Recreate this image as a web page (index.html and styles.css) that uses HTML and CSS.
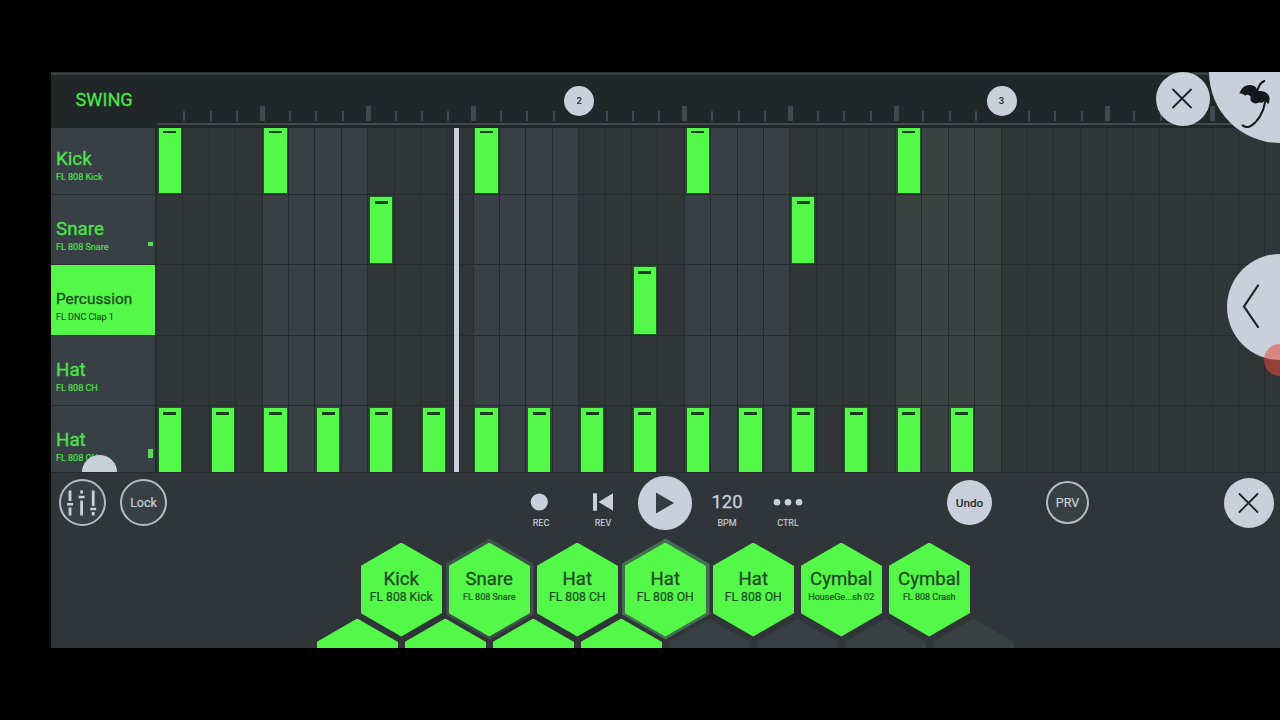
FILE: index.html
```html
<!DOCTYPE html>
<html lang="en">
<head>
    <meta charset="UTF-8">
    <meta name="viewport" content="width=device-width, initial-scale=1.0">
    <title>Step Sequencer</title>
    <link rel="stylesheet" href="styles.css">
</head>
<body>

<div class="app">
    <!-- Ruler -->
    <div class="header">
        <div class="swing">SWING</div>
        <div class="ruler" id="ruler"></div>
    </div>

    <!-- Channels and steps -->
    <div class="sequencer">
        <div class="channels">
            <div class="channel">
                <div class="channel-name">Kick</div>
                <div class="channel-sample">FL 808 Kick</div>
            </div>
            <div class="channel">
                <div class="channel-name">Snare</div>
                <div class="channel-sample">FL 808 Snare</div>
                <span class="level low"></span>
            </div>
            <div class="channel selected">
                <div class="channel-name long">Percussion</div>
                <div class="channel-sample">FL DNC Clap 1</div>
            </div>
            <div class="channel">
                <div class="channel-name">Hat</div>
                <div class="channel-sample">FL 808 CH</div>
            </div>
            <div class="channel">
                <div class="channel-name">Hat</div>
                <div class="channel-sample">FL 808 OH</div>
                <span class="level"></span>
            </div>
        </div>
        <div class="steps" id="steps"></div>
        <div class="playhead"></div>
        <div class="knob"></div>
    </div>

    <!-- Transport -->
    <div class="toolbar">
        <button class="ring mixer">
            <svg width="30" height="28" viewBox="0 0 30 28">
                <path d="M3 1.500v10.500M3 18.500v8M14.600 1.500v3M14.600 11.500v15M26.200 1.500v15.500M26.200 23v3.500" stroke-width="2.800"/>
                <path d="M0 15.300h6M11.600 8h6M23.200 20h6" stroke-width="2.600"/>
            </svg>
        </button>
        <button class="ring lock">Lock</button>
        <div class="control rec">
            <svg width="20" height="20" viewBox="0 0 20 20"><circle cx="8.300" cy="10" r="8.600"/></svg>
            <span>REC</span>
        </div>
        <div class="control rev">
            <svg width="20" height="20" viewBox="0 0 20 20"><path d="M0 1.300h4v17.400h-4zM20 1.300v17.400L5.500 10z"/></svg>
            <span>REV</span>
        </div>
        <button class="round play">
            <svg width="18" height="22" viewBox="0 0 18 22"><path d="M0 .5v21L18 11z"/></svg>
        </button>
        <div class="control bpm">
            <strong>120</strong>
            <span>BPM</span>
        </div>
        <div class="control ctrl">
            <svg width="30" height="20" viewBox="0 0 30 20"><circle cx="4" cy="10.300" r="3.300"/><circle cx="15" cy="10.300" r="3.300"/><circle cx="26" cy="10.300" r="3.300"/></svg>
            <span>CTRL</span>
        </div>
        <button class="round undo">Undo</button>
        <button class="ring prv">PRV</button>
        <button class="round close">
            <svg width="20" height="20" viewBox="0 0 20 20"><path d="M.5 1l18 18M18.500 1L.5 19"/></svg>
        </button>
    </div>

    <!-- Drum pads -->
    <div class="pads">
        <div class="pad-row" id="padRow"></div>
        <div class="pad-row offset" id="padRowBelow"></div>
    </div>

    <button class="round close close-top">
        <svg width="20" height="20" viewBox="0 0 20 20"><path d="M0 .5l18 18M18 .5L0 18.500"/></svg>
    </button>
    <div class="corner">
        <svg width="55" height="70" viewBox="0 0 165 210">
            <path class="leaf" d="M43 70C50 52 62 44 76 45C90 46 97 54 97 64C106 62 122 63 130 74C136 84 134 96 129 103C126 97 121 94 116 95C112 99 107 100 103 96C98 101 90 101 86 99C77 96 74 88 77 79C70 73 64 73 61 77C56 73 50 71 43 70z"/>
            <path class="stem" d="M118 33C107 37 101 48 97 62M120 97C116 128 96 156 80 166C68 174 62 172 53 166"/>
        </svg>
    </div>
    <button class="drawer">
        <svg width="16" height="44" viewBox="0 0 16 44"><path d="M15 1.500L1 22.500l14 20.500"/></svg>
    </button>
    <div class="touch"></div>
</div>

<script>
    var STEP_COUNT = 43;
    var patterns = [
        [0, 4, 12, 20, 28],
        [8, 24],
        [18],
        [],
        [0, 2, 4, 6, 8, 10, 12, 14, 16, 18, 20, 22, 24, 26, 28, 30]
    ];
    var pads = [
        ["Kick", "FL 808 Kick", ""],
        ["Snare", "FL 808 Snare", "small fading"],
        ["Hat", "FL 808 CH", ""],
        ["Hat", "FL 808 OH", "hit"],
        ["Hat", "FL 808 OH", ""],
        ["Cymbal", "HouseGe...sh 02", "small"],
        ["Cymbal", "FL 808 Crash", "small"]
    ];

    drawRuler();
    drawSteps();
    drawPads();

    function drawRuler() {
        var html = "";
        for (var i = 0; i < STEP_COUNT; i++) {
            if (i > 0 && i % 16 === 0) {
                html += "<div class='tick'><span class='bar-number'>" + (i / 16 + 1) + "</span></div>";
            } else if (i === 0) {
                html += "<div class='tick'></div>";
            } else {
                html += "<div class='tick " + (i % 4 === 0 ? "major" : "minor") + "'></div>";
            }
        }
        document.getElementById("ruler").innerHTML = html;
    }

    function drawSteps() {
        var html = "";
        patterns.forEach(function(pattern) {
            for (var i = 0; i < STEP_COUNT; i++) {
                var shade = "";
                if (i < 28 && i % 8 >= 4) shade = " alt";
                if (i >= 28 && i < 32) shade = " last";
                html += "<div class='step" + shade + "'>" + (pattern.indexOf(i) > -1 ? "<div class='note'></div>" : "") + "</div>";
            }
        });
        document.getElementById("steps").innerHTML = html;
    }

    function drawPads() {
        document.getElementById("padRow").innerHTML = pads.map(function(pad) {
            return "<div class='pad " + pad[2] + "'><div class='hex'><div class='pad-name'>" + pad[0] + "</div><div class='pad-sample'>" + pad[1] + "</div></div></div>";
        }).join("");

        var html = "";
        for (var i = 0; i < 8; i++) {
            var state = i < 4 ? "" : (i < 6 ? "empty" : "empty green");
            html += "<div class='pad " + state + "'><div class='hex'></div></div>";
        }
        document.getElementById("padRowBelow").innerHTML = html;
    }
</script>

</body>
</html>
```
FILE: styles.css
```css
* {
    box-sizing: border-box;
}
body {
    margin: 0;
    padding: 72px 0 72px 51px;
    height: 720px;
    background-color: #000;
    font-family: Roboto, sans-serif;
    overflow: hidden;
}
button {
    border: none;
    padding: 0;
    margin: 0;
    font-family: inherit;
}
.app {
    position: relative;
    display: flex;
    flex-direction: column;
    height: 576px;
    background-color: #303539;
    overflow: hidden;
}

/* Ruler */
.header {
    display: flex;
    height: 56px;
    flex-shrink: 0;
    background-color: #212629;
    border-top: 1px solid #2b3033;
    box-shadow: inset 0 2px #3a4144;
}
.swing {
    width: 106px;
    flex-shrink: 0;
    padding: 15px 0 0 24.500px;
    font-size: 18.200px;
    line-height: 24px;
    color: #4be548;
    -webkit-text-stroke: 0.3px;
}
.ruler {
    display: grid;
    grid-template-columns: repeat(43, 26.4px);
    height: 52px;
    border-bottom: 2px solid #434a4e;
}
.tick {
    position: relative;
    display: flex;
    align-items: flex-end;
    padding-bottom: 2.500px;
}
.tick.minor::before {
    content: "";
    width: 2px;
    height: 10px;
    background-color: #42484d;
}
.tick.major::before {
    content: "";
    width: 5px;
    height: 15px;
    margin-left: -2.400px;
    background-color: #42484d;
}
.bar-number {
    position: absolute;
    left: -15px;
    top: 13px;
    width: 30px;
    height: 30px;
    border-radius: 50%;
    background-color: #c9cfdb;
    color: #25292d;
    font-size: 9.5px;
    font-weight: 500;
    line-height: 30px;
    text-align: center;
}

/* Sequencer */
.sequencer {
    position: relative;
    display: flex;
    align-items: flex-end;
    height: 344px;
    flex-shrink: 0;
    overflow: hidden;
    background-color: #262b2e;
}
.channels,
.steps {
    display: grid;
    grid-template-rows: repeat(5, 70.4px);
    height: 352px;
    margin-bottom: -4.700px;
}
.channels {
    width: 104px;
    margin-right: 2px;
    flex-shrink: 0;
}
.channel {
    position: relative;
    padding: 22px 0 0 5px;
    background-color: #384046;
    border-bottom: 1px solid #272c2f;
    color: #4be548;
}
.channel.selected {
    background-color: #53f848;
    color: #1d4c22;
}
.channel-name {
    font-size: 18.800px;
    line-height: 24px;
    -webkit-text-stroke: 0.3px;
}
.channel-name.long {
    font-size: 15.400px;
}
.channel-sample {
    font-size: 9px;
    line-height: 12px;
    -webkit-text-stroke: 0.15px;
}
.level {
    position: absolute;
    right: 2px;
    bottom: 18px;
    width: 5px;
    height: 9px;
    background-color: #5bdd58;
}
.level.low {
    height: 4px;
}
.steps {
    grid-template-columns: repeat(43, 26.4px);
}
.step {
    padding: 2px 0 1px 1.800px;
    background-color: #303537;
    border-right: 1px solid #262b2e;
    border-bottom: 1px solid #262b2e;
}
.step.alt {
    background-color: #384046;
}
.step.last {
    background-color: #394241;
}
.note {
    height: 100%;
    width: 22.200px;
    padding-top: 4px;
    background-color: #53f848;
    box-shadow: 0 0 0 1px #1b5a22;
}
.note::before {
    content: "";
    display: block;
    width: 13px;
    height: 2.500px;
    margin: 0 auto;
    background-color: #14401a;
}
.playhead {
    position: absolute;
    left: 402.500px;
    top: 0;
    width: 5px;
    height: 100%;
    background-color: #c9cfdb;
    box-shadow: 0 0 0 1px #24292c;
}
.knob {
    position: absolute;
    left: 31px;
    bottom: -17px;
    width: 35px;
    height: 34px;
    border-radius: 50%;
    background-color: #c9cfdb;
}

/* Transport */
.toolbar {
    display: flex;
    align-items: center;
    height: 60px;
    flex-shrink: 0;
    padding-left: 7.500px;
    border-top: 1px solid #26292c;
    color: #c9cfdb;
}
.ring,
.round {
    display: flex;
    align-items: center;
    justify-content: center;
    flex-shrink: 0;
    width: 47px;
    height: 47px;
    border-radius: 50%;
}
.ring {
    border: 2px solid #b4bac4;
    background-color: #384046;
    color: #c9cfdb;
    font-size: 12.500px;
    -webkit-text-stroke: 0.2px;
}
.round {
    background-color: #c9cfdb;
    color: #25292d;
}
.mixer svg {
    stroke: #c9cfdb;
    overflow: visible;
    flex-shrink: 0;
}
.lock {
    margin-left: 14.500px;
}
.control {
    display: flex;
    flex-direction: column;
    align-items: center;
    width: 32px;
    padding-top: 16px;
}
.control svg {
    fill: #c9cfdb;
    overflow: visible;
}
.control strong {
    font-size: 18.500px;
    font-weight: 400;
    line-height: 20px;
    -webkit-text-stroke: 0.3px;
}
.control span {
    margin-top: 5px;
    font-size: 9px;
    line-height: 12px;
    -webkit-text-stroke: 0.15px;
}
.rec {
    margin-left: 358px;
}
.rev {
    margin-left: 30px;
}
.play {
    width: 54px;
    height: 54px;
    margin-left: 19px;
}
.play svg {
    fill: #343b42;
}
.bpm {
    margin-left: 19px;
}
.ctrl {
    margin-left: 29px;
}
.undo {
    width: 45px;
    height: 45px;
    margin-left: 143px;
    font-size: 11.800px;
    font-weight: 500;
}
.prv {
    width: 43px;
    height: 43px;
    margin-left: 54px;
    background-color: #384141;
}
.close {
    width: 50px;
    height: 50px;
    margin-left: 135px;
}
.close svg,
.drawer svg {
    fill: none;
    stroke: #1d2126;
    stroke-width: 1.800;
    stroke-linecap: round;
    overflow: visible;
}

/* Drum pads */
.pads {
    flex: 1;
    padding: 6.500px 0 0 306.500px;
    overflow: hidden;
}
.pad-row {
    display: flex;
    height: 76px;
}
.pad-row.offset {
    margin-left: -44px;
}
.pad {
    width: 88px;
    height: 101px;
    padding: 4px 3px 3px;
    flex-shrink: 0;
    clip-path: polygon(50% 0, 100% 25%, 100% 75%, 50% 100%, 0 75%, 0 25%);
}
.pad.fading {
    background-color: #3d5049;
}
.pad.hit {
    background-color: #42714f;
}
.hex {
    width: 81.500px;
    height: 94px;
    padding-top: 25.500px;
    background-color: #53f848;
    color: #1d4c22;
    text-align: center;
    clip-path: polygon(50% 0, 100% 25%, 100% 75%, 50% 100%, 0 75%, 0 25%);
}
.pad.empty .hex {
    background-color: #373e44;
}
.pad.empty.green .hex {
    background-color: #384041;
}
.pad-name {
    font-size: 18.600px;
    line-height: 22px;
    -webkit-text-stroke: 0.3px;
}
.pad-sample {
    font-size: 12.200px;
    line-height: 14px;
    -webkit-text-stroke: 0.2px;
}
.pad.small .pad-sample {
    font-size: 9px;
}

/* Floating controls */
.close-top {
    position: absolute;
    left: 1105px;
    top: -0.500px;
    width: 54px;
    height: 54px;
    margin-left: 0;
}
.corner {
    position: absolute;
    right: -71px;
    top: -71px;
    width: 142px;
    height: 142px;
    border-radius: 50%;
    background-color: #c9cfdb;
}
.corner svg {
    position: absolute;
    left: 16px;
    top: 69px;
}
.leaf {
    fill: #14181c;
}
.stem {
    fill: none;
    stroke: #14181c;
    stroke-width: 6;
    stroke-linecap: round;
}
.drawer {
    position: absolute;
    right: -53px;
    top: 182px;
    width: 106px;
    height: 106px;
    padding: 1px 0 0 16px;
    border-radius: 50%;
    background-color: #c9cfdb;
    text-align: left;
}
.drawer svg {
    stroke-width: 2.200;
}
.touch {
    position: absolute;
    right: -16px;
    top: 272px;
    width: 32px;
    height: 32px;
    border-radius: 50%;
    background-color: rgba(225, 75, 60, 0.55);
}
```
